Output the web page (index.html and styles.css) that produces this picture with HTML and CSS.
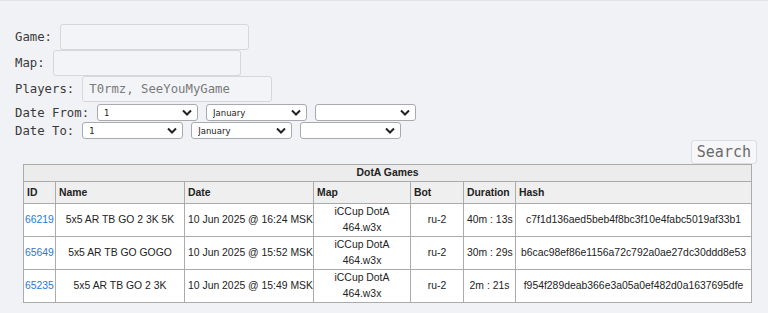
FILE: index.html
```html
<!DOCTYPE html>
<html lang="en">
<head>
  <meta charset="UTF-8">
  <meta name="viewport" content="width=device-width, initial-scale=1.0">
  <title>DotA Games</title>
  <link rel="stylesheet" href="styles.css">
</head>
<body>
  <div class="topline"></div>

  <div class="page">
    <form class="search" onsubmit="return false">
      <div class="row">
        <label for="game">Game:</label>
        <input type="text" id="game" class="field" style="width: 189px">
      </div>
      <div class="row">
        <label for="map">Map:</label>
        <input type="text" id="map" class="field" style="width: 188px">
      </div>
      <div class="row">
        <label for="players">Players:</label>
        <input type="text" id="players" class="field" style="width: 190px" placeholder="T0rmz, SeeYouMyGame">
      </div>
      <div class="row row-date">
        <label>Date From:</label>
        <div class="selects">
          <select class="pick"><option>1</option></select>
          <select class="pick"><option>January</option></select>
          <select class="pick"><option></option></select>
        </div>
      </div>
      <div class="row row-date">
        <label>Date To:</label>
        <div class="selects">
          <select class="pick"><option>1</option></select>
          <select class="pick"><option>January</option></select>
          <select class="pick"><option></option></select>
        </div>
      </div>

      <div class="actions">
        <button type="submit" class="btn-search">Search</button>
      </div>
    </form>

    <div class="results">
      <table class="games">
        <colgroup>
          <col style="width: 32px">
          <col style="width: 129px">
          <col style="width: 129px">
          <col style="width: 97px">
          <col style="width: 53px">
          <col style="width: 52px">
          <col style="width: 236px">
        </colgroup>
        <thead>
          <tr><th colspan="7" class="title">DotA Games</th></tr>
          <tr class="head">
            <th>ID</th>
            <th>Name</th>
            <th>Date</th>
            <th>Map</th>
            <th>Bot</th>
            <th>Duration</th>
            <th>Hash</th>
          </tr>
        </thead>
        <tbody>
          <tr>
            <td class="id"><a href="#">66219</a></td>
            <td>5x5 AR TB GO 2 3K 5K</td>
            <td>10 Jun 2025 @ 16:24 MSK</td>
            <td>iCCup DotA<br>464.w3x</td>
            <td>ru-2</td>
            <td>40m : 13s</td>
            <td>c7f1d136aed5beb4f8bc3f10e4fabc5019af33b1</td>
          </tr>
          <tr>
            <td class="id"><a href="#">65649</a></td>
            <td>5x5 AR TB GO GOGO</td>
            <td>10 Jun 2025 @ 15:52 MSK</td>
            <td>iCCup DotA<br>464.w3x</td>
            <td>ru-2</td>
            <td>30m : 29s</td>
            <td>b6cac98ef86e1156a72c792a0ae27dc30ddd8e53</td>
          </tr>
          <tr>
            <td class="id"><a href="#">65235</a></td>
            <td>5x5 AR TB GO 2 3K</td>
            <td>10 Jun 2025 @ 15:49 MSK</td>
            <td>iCCup DotA<br>464.w3x</td>
            <td>ru-2</td>
            <td>2m : 21s</td>
            <td>f954f289deab366e3a05a0ef482d0a1637695dfe</td>
          </tr>
        </tbody>
      </table>
    </div>
  </div>
</body>
</html>
```

FILE: styles.css
```css
body {
  margin: 0;
  background: #f1f2f6;
  color: #333;
  font-family: "DejaVu Sans Mono", "Liberation Mono", monospace;
  font-size: 12.3px;
}
.topline {
  height: 1px;
  background: #e2e3e8;
}
.page {
  padding: 23px 11px 0 15px;
}

/* search form */
.row {
  display: flex;
  align-items: center;
  gap: 8px;
  height: 26px;
}
.row label {
  white-space: pre;
  color: #3a3a3a;
}
.field {
  box-sizing: border-box;
  height: 26px;
  margin: 0;
  padding: 0 6px;
  border: 1px solid #d6d7dc;
  border-radius: 3px;
  background: #f3f4f8;
  font-family: "DejaVu Sans Mono", "Liberation Mono", monospace;
  font-size: 12.3px;
  color: #333;
}
.field::placeholder {
  color: #7a7a7a;
}
.row-date {
  height: 17px;
  margin-top: 2px;
}
.row-date + .row-date {
  margin-top: 1px;
}
.selects {
  display: flex;
  gap: 8px;
}
.pick {
  appearance: none;
  -webkit-appearance: none;
  box-sizing: border-box;
  width: 101px;
  height: 17px;
  margin: 0;
  padding: 0 16px 0 6px;
  border: 1px solid #a9aaaf;
  border-radius: 3px;
  background: #fff url("data:image/svg+xml;utf8,<svg xmlns='http://www.w3.org/2000/svg' width='10' height='7' viewBox='0 0 10 7'><path d='M1 1.5l4 4 4-4' fill='none' stroke='%23222' stroke-width='2'/></svg>") no-repeat right 5px center;
  font-family: "DejaVu Sans", "Liberation Sans", sans-serif;
  font-size: 8.5px;
  color: #222;
}
.actions {
  display: flex;
  justify-content: flex-end;
  margin-top: 1px;
}
.btn-search {
  height: 24px;
  padding: 0 5px;
  border: 1px solid #dcdde1;
  border-radius: 3px;
  background: #f7f7f9;
  font-family: "DejaVu Sans Mono", "Liberation Mono", monospace;
  font-size: 15px;
  color: #6a6a6a;
  cursor: pointer;
}

/* games table */
.results {
  margin: 0 6px 0 8px;
}
.games {
  table-layout: fixed;
  width: 728px;
  border-collapse: collapse;
  border: 1px solid #a3a3a3;
  font-family: "Liberation Sans", Arial, sans-serif;
  font-size: 10.4px;
  color: #222;
}
.games th, .games td {
  border: 1px solid #ababab;
  line-height: 16px;
  padding: 0 3px;
  white-space: nowrap;
  overflow: hidden;
}
.games .title {
  background: #ececec;
  text-align: center;
  height: 15px;
}
.games .head th {
  background: #efefef;
  text-align: left;
  height: 21px;
}
.games td {
  background: #fff;
  text-align: center;
  height: 31px;
}
.games td.id {
  text-align: left;
  padding-left: 1px;
}
.games a {
  color: #2a79d6;
  text-decoration: none;
}
```
